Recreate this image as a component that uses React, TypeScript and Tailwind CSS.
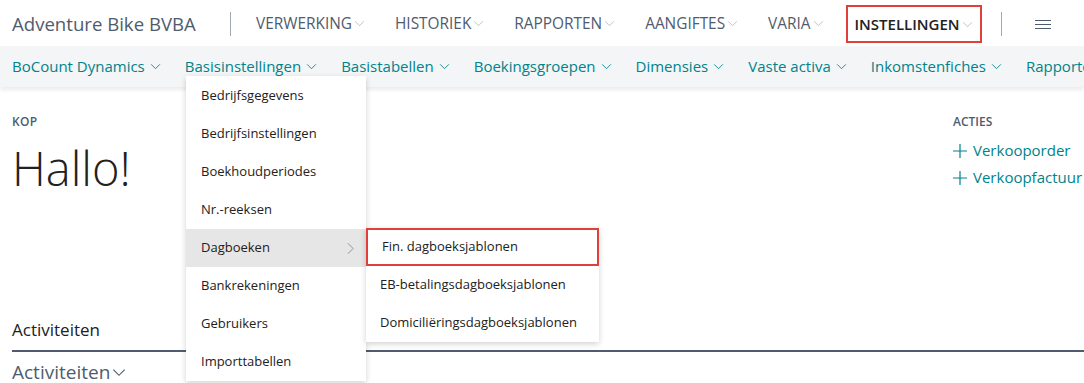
import React from 'react'

const Chevron = ({ className = '' }: { className?: string }) => (
  <svg viewBox="0 0 12 8" className={'inline-block w-[11px] h-[7px] ml-[2px] ' + className} fill="none" stroke="currentColor" strokeWidth="1">
    <path d="M1 1.5l5 5 5-5" />
  </svg>
)

const Plus = () => (
  <svg viewBox="0 0 14 14" className="w-[14px] h-[14px] mr-[6px]" fill="none" stroke="currentColor" strokeWidth="1.2">
    <path d="M7 0v14M0 7h14" />
  </svg>
)

const topItems = ['VERWERKING', 'HISTORIEK', 'RAPPORTEN', 'AANGIFTES', 'VARIA']
const subItems = ['BoCount Dynamics', 'Basisinstellingen', 'Basistabellen', 'Boekingsgroepen', 'Dimensies', 'Vaste activa', 'Inkomstenfiches', 'Rapporten']
const menuItems = ['Bedrijfsgegevens', 'Bedrijfsinstellingen', 'Boekhoudperiodes', 'Nr.-reeksen', 'Dagboeken', 'Bankrekeningen', 'Gebruikers', 'Importtabellen']
const subMenu = ['Fin. dagboeksjablonen', 'EB-betalingsdagboeksjablonen', 'Domiciliëringsdagboeksjablonen']

export default function App() {
  return (
    <div className="relative w-[1084px] h-[383px] overflow-hidden bg-white font-['Open_Sans',sans-serif] text-[#212121]">
      {/* TOP BAR */}
      <div className="h-[46px] flex items-center pl-[12px] pt-[2px] whitespace-nowrap">
        <div className="w-[181px] text-[18.6px] text-[#505c6d]">Adventure Bike BVBA</div>
        <div className="w-px h-[24px] bg-[#a0a8b2] ml-[37px] mr-[14px]" />
        <div className="flex items-center gap-[30px] pl-[11px]">
          {topItems.map((t) => (
            <div key={t} className="text-[15.4px] text-[#505c6d] flex items-center">
              {t}
              <Chevron className="text-[#b4bac2]" />
            </div>
          ))}
        </div>
        <div className="ml-[22px] h-[38px] px-[7px] border-[2px] border-[#e0403a] flex items-center text-[15px] font-semibold text-[#212121]">
          INSTELLINGEN
          <Chevron className="text-[#b4bac2]" />
        </div>
        <div className="w-px h-[24px] bg-[#a0a8b2] ml-[19px]" />
        <div className="ml-[33px] flex flex-col gap-[3px]">
          <div className="w-[16px] h-px bg-[#505c6d]" />
          <div className="w-[16px] h-px bg-[#505c6d]" />
          <div className="w-[16px] h-px bg-[#505c6d]" />
        </div>
      </div>

      {/* SECOND BAR */}
      <div className="h-[41px] bg-[#f3f5f7] flex items-center pl-[12px] gap-[24px] whitespace-nowrap shadow-[0_3px_4px_rgba(0,0,0,0.08)] relative z-10">
        {subItems.map((t) => (
          <div key={t} className="text-[15px] text-[#00838a] flex items-center">
            {t}
            {t !== 'Rapporten' && <Chevron className="text-[#00838a] ml-[5px]" />}
          </div>
        ))}
      </div>

      {/* CONTENT */}
      <div className="flex justify-between pl-[12px] pt-[26px]">
        <div>
          <div className="text-[12px] font-semibold text-[#505c6d] tracking-[0.3px]">KOP</div>
          <div className="text-[47px] font-light leading-[56px] mt-[9px] text-[#212121]">Hallo!</div>
        </div>
        <div className="w-[131px] whitespace-nowrap">
          <div className="text-[12px] font-semibold text-[#505c6d]">ACTIES</div>
          <div className="mt-[6px] text-[15px] text-[#00838a] leading-[27px]">
            <div className="flex items-center"><Plus />Verkooporder</div>
            <div className="flex items-center"><Plus />Verkoopfactuur</div>
          </div>
        </div>
      </div>

      <div className="absolute left-[12px] right-0 top-[318px]">
        <div className="text-[17px] text-[#212121] leading-[24px]">Activiteiten</div>
        <div className="h-[2px] bg-[#505c6d] mt-[8px]" />
        <div className="text-[19px] text-[#505c6d] mt-[6px] flex items-center">
          Activiteiten
          <Chevron className="text-[#505c6d] w-[14px] h-[9px]" />
        </div>
      </div>

      {/* DROPDOWN */}
      <div className="absolute left-[186px] top-[76px] w-[180px] bg-white shadow-[0_2px_6px_rgba(0,0,0,0.18)] z-20 pt-[1px]">
        {menuItems.map((t) => (
          <div
            key={t}
            className={
              'h-[38px] flex items-center justify-between pl-[15px] pr-[12px] text-[13px] text-[#212121] ' +
              (t === 'Dagboeken' ? 'bg-[#e6e6e6]' : '')
            }
          >
            {t}
            {t === 'Dagboeken' && (
              <svg viewBox="0 0 8 14" className="w-[7px] h-[13px]" fill="none" stroke="#888" strokeWidth="1">
                <path d="M1 1l6 6-6 6" />
              </svg>
            )}
          </div>
        ))}
      </div>

      {/* SUBMENU */}
      <div className="absolute left-[366px] top-[228px] w-[233px] bg-white shadow-[0_2px_6px_rgba(0,0,0,0.18)] z-30">
        {subMenu.map((t, i) => (
          <div
            key={t}
            className={
              'h-[38px] flex items-center pl-[14px] text-[13px] text-[#212121] whitespace-nowrap ' +
              (i === 0 ? 'border-[2px] border-[#e0403a] pl-[12px]' : '')
            }
          >
            {t}
          </div>
        ))}
      </div>
    </div>
  )
}
